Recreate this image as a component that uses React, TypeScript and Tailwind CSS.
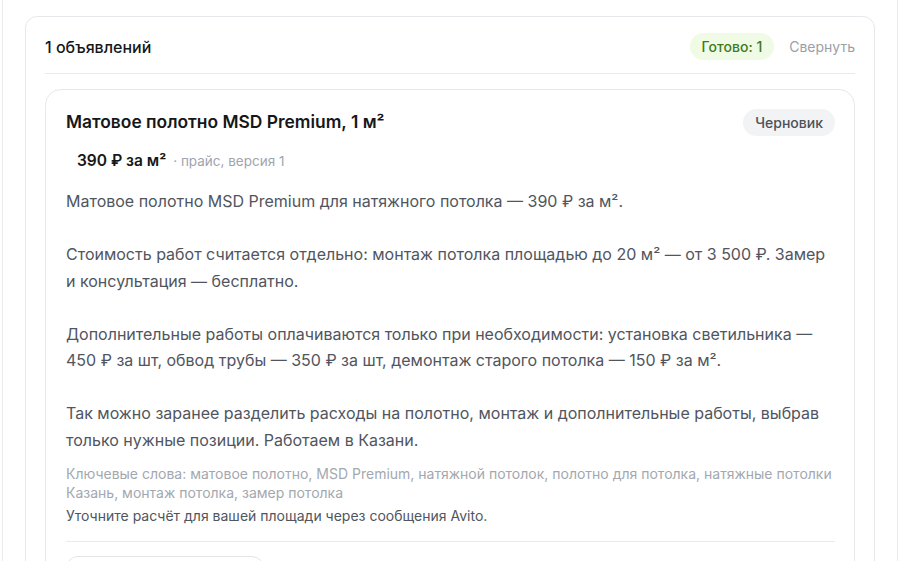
import React from "react";

const DESCRIPTION = [
  "Матовое полотно MSD Premium для натяжного потолка — 390 ₽ за м².",
  "Стоимость работ считается отдельно: монтаж потолка площадью до 20 м² — от 3 500 ₽. Замер и консультация — бесплатно.",
  "Дополнительные работы оплачиваются только при необходимости: установка светильника — 450 ₽ за шт, обвод трубы — 350 ₽ за шт, демонтаж старого потолка — 150 ₽ за м².",
  "Так можно заранее разделить расходы на полотно, монтаж и дополнительные работы, выбрав только нужные позиции. Работаем в Казани.",
];

const App: React.FC = () => {
  return (
    <div className="min-h-screen bg-white font-['Inter','Noto_Sans',sans-serif]">
      <div className="mx-[2px] border-x border-[#e9ebee] px-[22px] pt-4 pb-10">
        {/* Group card */}
        <div className="rounded-xl border border-[#e6e8eb] px-[19px] pb-6">
          {/* Header */}
          <div className="flex items-center justify-between h-[57px] pt-[3px] border-b border-[#e8eaed]">
            <span className="text-[16px] font-medium text-[#15171a]">1 объявлений</span>
            <div className="flex items-center gap-[15px]">
              <span className="rounded-full bg-[#effbe4] px-3 h-[27px] flex items-center text-[14px] font-medium text-[#3f7a1d]">
                Готово: 1
              </span>
              <button className="text-[14px] text-[#9aa0a8]">Свернуть</button>
            </div>
          </div>

          {/* Listing card */}
          <div className="mt-[15px] rounded-2xl border border-[#e6e8eb] pl-5 pr-[19px] pt-[19px] pb-6">
            <div className="flex items-start justify-between">
              <h2 className="text-[17.4px] font-semibold leading-[26px] text-[#15171a]">
                Матовое полотно MSD Premium, 1 м²
              </h2>
              <span className="rounded-full bg-[#f1f3f5] px-3 h-[27px] flex items-center text-[14px] font-medium text-[#4b5059]">
                Черновик
              </span>
            </div>

            <div className="mt-[13px] flex items-baseline gap-[7px] pl-[11px]">
              <span className="text-[15.5px] font-semibold text-[#15171a]">390 ₽ за м²</span>
              <span className="text-[13.5px] text-[#a0a5ad]">· прайс, версия 1</span>
            </div>

            <div className="mt-[16px] space-y-[26.5px] text-[16px] leading-[26.5px] text-[#50555e]">
              {DESCRIPTION.map((p, i) => (
                <p key={i}>{p}</p>
              ))}
            </div>

            <p className="mt-[11px] text-[14px] leading-[19px] text-[#a3a8b0]">
              Ключевые слова: матовое полотно, MSD Premium, натяжной потолок, полотно для потолка, натяжные потолки Казань, монтаж потолка, замер потолка
            </p>
            <p className="mt-1 text-[14px] leading-[19px] text-[#50555e]">
              Уточните расчёт для вашей площади через сообщения Avito.
            </p>

            <div className="mt-[16px] border-t border-[#e8eaed] pt-[14px]">
              <button className="w-[198px] h-10 rounded-xl border border-[#e3e5e8] text-[14px] text-[#2b2f35]">
                Скопировать текст
              </button>
            </div>
          </div>
        </div>
      </div>
    </div>
  );
};

export default App;
